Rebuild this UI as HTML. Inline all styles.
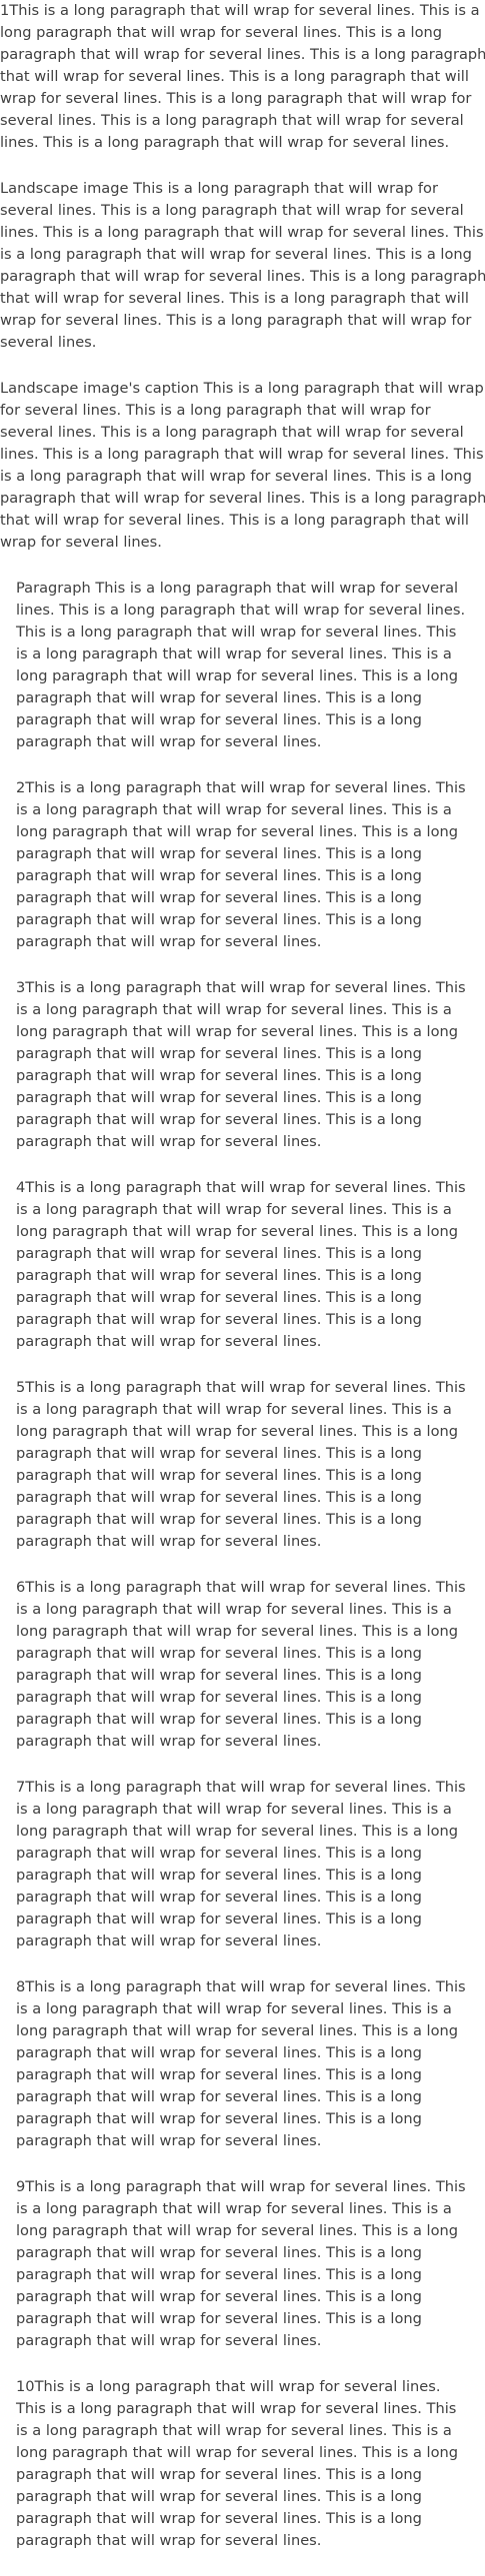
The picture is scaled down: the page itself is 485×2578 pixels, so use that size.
<!DOCTYPE html>
<html><head><meta charset="utf-8"><style>
html,body{margin:0;padding:0;background:#fff;}
body{font-family:"DejaVu Sans","Liberation Sans",sans-serif;font-size:14.6px;line-height:22px;color:#404040;width:485px;overflow:hidden;}
p{margin:0 0 24px 0;white-space:nowrap;}
.i{padding-left:16px;}
</style></head><body>
<p>1This is a long paragraph that will wrap for several lines. This is a<br>long paragraph that will wrap for several lines. This is a long<br>paragraph that will wrap for several lines. This is a long paragraph<br>that will wrap for several lines. This is a long paragraph that will<br>wrap for several lines. This is a long paragraph that will wrap for<br>several lines. This is a long paragraph that will wrap for several<br>lines. This is a long paragraph that will wrap for several lines.</p>
<p>Landscape image This is a long paragraph that will wrap for<br>several lines. This is a long paragraph that will wrap for several<br>lines. This is a long paragraph that will wrap for several lines. This<br>is a long paragraph that will wrap for several lines. This is a long<br>paragraph that will wrap for several lines. This is a long paragraph<br>that will wrap for several lines. This is a long paragraph that will<br>wrap for several lines. This is a long paragraph that will wrap for<br>several lines.</p>
<p>Landscape image's caption This is a long paragraph that will wrap<br>for several lines. This is a long paragraph that will wrap for<br>several lines. This is a long paragraph that will wrap for several<br>lines. This is a long paragraph that will wrap for several lines. This<br>is a long paragraph that will wrap for several lines. This is a long<br>paragraph that will wrap for several lines. This is a long paragraph<br>that will wrap for several lines. This is a long paragraph that will<br>wrap for several lines.</p>
<p class="i">Paragraph This is a long paragraph that will wrap for several<br>lines. This is a long paragraph that will wrap for several lines.<br>This is a long paragraph that will wrap for several lines. This<br>is a long paragraph that will wrap for several lines. This is a<br>long paragraph that will wrap for several lines. This is a long<br>paragraph that will wrap for several lines. This is a long<br>paragraph that will wrap for several lines. This is a long<br>paragraph that will wrap for several lines.</p>
<p class="i">2This is a long paragraph that will wrap for several lines. This<br>is a long paragraph that will wrap for several lines. This is a<br>long paragraph that will wrap for several lines. This is a long<br>paragraph that will wrap for several lines. This is a long<br>paragraph that will wrap for several lines. This is a long<br>paragraph that will wrap for several lines. This is a long<br>paragraph that will wrap for several lines. This is a long<br>paragraph that will wrap for several lines.</p>
<p class="i">3This is a long paragraph that will wrap for several lines. This<br>is a long paragraph that will wrap for several lines. This is a<br>long paragraph that will wrap for several lines. This is a long<br>paragraph that will wrap for several lines. This is a long<br>paragraph that will wrap for several lines. This is a long<br>paragraph that will wrap for several lines. This is a long<br>paragraph that will wrap for several lines. This is a long<br>paragraph that will wrap for several lines.</p>
<p class="i">4This is a long paragraph that will wrap for several lines. This<br>is a long paragraph that will wrap for several lines. This is a<br>long paragraph that will wrap for several lines. This is a long<br>paragraph that will wrap for several lines. This is a long<br>paragraph that will wrap for several lines. This is a long<br>paragraph that will wrap for several lines. This is a long<br>paragraph that will wrap for several lines. This is a long<br>paragraph that will wrap for several lines.</p>
<p class="i">5This is a long paragraph that will wrap for several lines. This<br>is a long paragraph that will wrap for several lines. This is a<br>long paragraph that will wrap for several lines. This is a long<br>paragraph that will wrap for several lines. This is a long<br>paragraph that will wrap for several lines. This is a long<br>paragraph that will wrap for several lines. This is a long<br>paragraph that will wrap for several lines. This is a long<br>paragraph that will wrap for several lines.</p>
<p class="i">6This is a long paragraph that will wrap for several lines. This<br>is a long paragraph that will wrap for several lines. This is a<br>long paragraph that will wrap for several lines. This is a long<br>paragraph that will wrap for several lines. This is a long<br>paragraph that will wrap for several lines. This is a long<br>paragraph that will wrap for several lines. This is a long<br>paragraph that will wrap for several lines. This is a long<br>paragraph that will wrap for several lines.</p>
<p class="i">7This is a long paragraph that will wrap for several lines. This<br>is a long paragraph that will wrap for several lines. This is a<br>long paragraph that will wrap for several lines. This is a long<br>paragraph that will wrap for several lines. This is a long<br>paragraph that will wrap for several lines. This is a long<br>paragraph that will wrap for several lines. This is a long<br>paragraph that will wrap for several lines. This is a long<br>paragraph that will wrap for several lines.</p>
<p class="i">8This is a long paragraph that will wrap for several lines. This<br>is a long paragraph that will wrap for several lines. This is a<br>long paragraph that will wrap for several lines. This is a long<br>paragraph that will wrap for several lines. This is a long<br>paragraph that will wrap for several lines. This is a long<br>paragraph that will wrap for several lines. This is a long<br>paragraph that will wrap for several lines. This is a long<br>paragraph that will wrap for several lines.</p>
<p class="i">9This is a long paragraph that will wrap for several lines. This<br>is a long paragraph that will wrap for several lines. This is a<br>long paragraph that will wrap for several lines. This is a long<br>paragraph that will wrap for several lines. This is a long<br>paragraph that will wrap for several lines. This is a long<br>paragraph that will wrap for several lines. This is a long<br>paragraph that will wrap for several lines. This is a long<br>paragraph that will wrap for several lines.</p>
<p class="i">10This is a long paragraph that will wrap for several lines.<br>This is a long paragraph that will wrap for several lines. This<br>is a long paragraph that will wrap for several lines. This is a<br>long paragraph that will wrap for several lines. This is a long<br>paragraph that will wrap for several lines. This is a long<br>paragraph that will wrap for several lines. This is a long<br>paragraph that will wrap for several lines. This is a long<br>paragraph that will wrap for several lines.</p>
</body></html>
